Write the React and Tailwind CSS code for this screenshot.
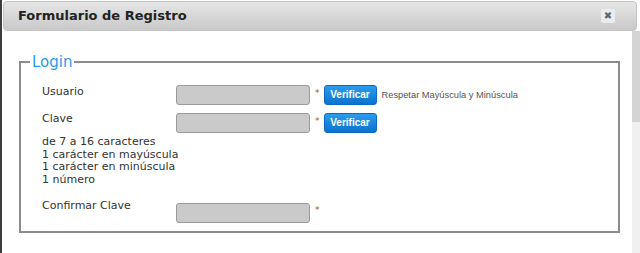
const font = { fontFamily: '"DejaVu Sans", Verdana, sans-serif' };
const arial = { fontFamily: '"Liberation Sans", Arial, sans-serif' };

function Field({ verify }) {
  return (
    <div className="flex items-center">
      <div className="w-[134px] h-[20px] rounded-[3px] border border-[#9a9a9a] bg-[#cacaca]" />
      <span className="ml-[5px] text-[9px] text-[#a0522d] leading-none -mt-[4px]">*</span>
      {verify && (
        <button
          className="ml-[4px] w-[53px] h-[20px] rounded-[3px] border border-[#0a6cc0] bg-gradient-to-b from-[#2a9cf0] to-[#0a72cc] text-white text-[10px] font-bold leading-none"
          style={arial}
        >
          Verificar
        </button>
      )}
    </div>
  );
}

export default function App() {
  return (
    <div className="w-[640px] h-[253px] flex bg-white overflow-hidden text-[#333]" style={font}>
      <div className="w-[2px] bg-[#3c3c3c]" />
      <div className="flex-1 flex flex-col pl-[1px]">
        <div className="mt-[1px] mr-[3px] h-[30px] flex items-center justify-between rounded-[4px] border border-[#c4c4c4] bg-gradient-to-b from-[#e6e6e6] to-[#c9c9c9] pl-[14px] pr-[21px]">
          <span className="text-[13px] font-bold text-[#222]">Formulario de Registro</span>
          <span className="w-[14px] h-[14px] rounded-[2px] bg-[#ececec] flex items-center justify-center text-[10px] font-bold text-[#666] leading-none">
            ✖
          </span>
        </div>
        <div className="flex flex-1">
          <div className="flex-1 pl-[16px] pr-[12px] pt-[22px]">
            <fieldset className="border-2 border-[#8c8c8c] pl-[21px] pb-[8px] pt-[14px]">
              <legend className="-ml-[12px] px-[2px] text-[15px] text-[#2a9af0] leading-[18px]">Login</legend>
              <div className="grid grid-cols-[134px_1fr] text-[11px] leading-[12.7px]">
                <div className="pt-[1px]">Usuario</div>
                <div className="flex items-center">
                  <Field verify />
                  <span className="ml-[5px] text-[9.3px] text-[#555]" style={arial}>
                    Respetar Mayúscula y Minúscula
                  </span>
                </div>
                <div className="pt-[8px]">Clave</div>
                <div className="pt-[8px]">
                  <Field verify />
                </div>
                <div className="col-span-2 pt-[3px]">
                  <div>de 7 a 16 caracteres</div>
                  <div>1 carácter en mayúscula</div>
                  <div>1 carácter en minúscula</div>
                  <div>1 número</div>
                </div>
                <div className="pt-[13px]">Confirmar Clave</div>
                <div className="pt-[16px]">
                  <Field />
                </div>
              </div>
            </fieldset>
          </div>
          <div className="w-[8px] bg-[#f0f0f0] flex flex-col">
            <div className="h-[91px] bg-[#d4d4d4]" />
          </div>
        </div>
      </div>
    </div>
  );
}
